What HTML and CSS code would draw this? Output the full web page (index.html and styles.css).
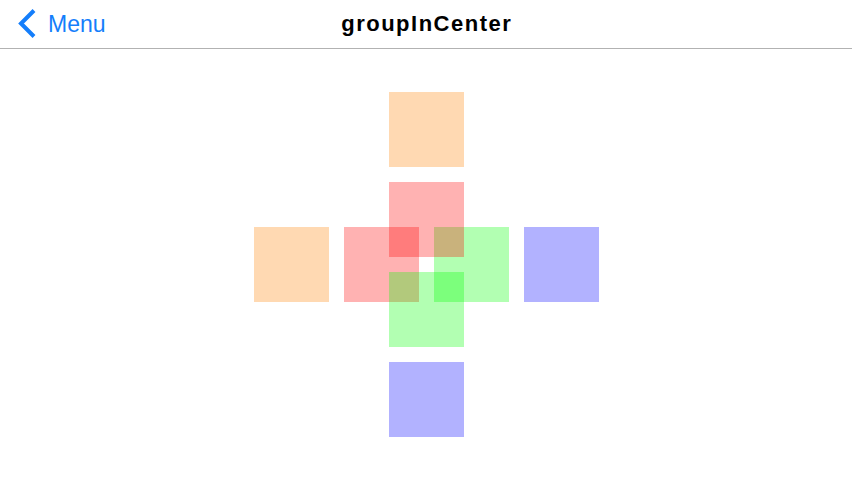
FILE: index.html
```html
<!DOCTYPE html>
<html>
<head>
<meta charset="utf-8">
<link rel="stylesheet" href="styles.css">
</head>
<body>
<header class="nav">
  <a class="back">
    <svg class="chev" width="18" height="30" viewBox="0 0 18 30"><path d="M16 1.5 L3 14.5 L16 27.5" fill="none" stroke="#147efb" stroke-width="4" stroke-linecap="butt" stroke-linejoin="miter"/></svg>
    <span class="back-label">Menu</span>
  </a>
  <h1 class="title">groupInCenter</h1>
</header>
<main class="stage">
  <div class="board">
    <div class="sq orange top"></div>
    <div class="sq orange left"></div>
    <div class="sq blue right"></div>
    <div class="sq blue bottom"></div>
    <div class="sq red inner-left"></div>
    <div class="sq green inner-right"></div>
    <div class="sq red inner-top"></div>
    <div class="sq green inner-bottom"></div>
  </div>
</main>
</body>
</html>
```
FILE: styles.css
```css
html, body {
  margin: 0;
  padding: 0;
  background: #fff;
  width: 852px;
  height: 480px;
  overflow: hidden;
  font-family: "Liberation Sans", Arial, sans-serif;
}
.nav {
  height: 48px;
  border-bottom: 1px solid #b2b2b2;
  display: grid;
  grid-template-columns: 1fr auto 1fr;
  align-items: center;
  box-sizing: content-box;
}
.back {
  display: flex;
  align-items: center;
  gap: 12px;
  padding-left: 18px;
  color: #147efb;
  font-size: 23px;
  grid-column: 1;
  grid-row: 1;
}
.chev { display: block; }
.back-label { line-height: 1; margin-top: 1px; }
.title {
  grid-column: 2;
  grid-row: 1;
  margin: 0;
  font-size: 22px;
  font-weight: bold;
  letter-spacing: 1.5px;
  padding-left: 1.5px;
  color: #000;
}
.stage {
  height: 431px;
  display: flex;
  align-items: center;
  justify-content: center;
}
.board {
  display: grid;
  grid-template-columns: repeat(23, 15px);
  grid-template-rows: repeat(23, 15px);
  margin-left: 1px;
}
.sq {
  grid-column-end: span 5;
  grid-row-end: span 5;
}
.orange { background: rgba(255, 128, 0, 0.3); }
.red { background: rgba(255, 0, 0, 0.3); }
.green { background: rgba(0, 255, 0, 0.3); }
.blue { background: rgba(0, 0, 255, 0.3); }
.top { grid-column-start: 10; grid-row-start: 1; }
.left { grid-column-start: 1; grid-row-start: 10; }
.right { grid-column-start: 19; grid-row-start: 10; }
.bottom { grid-column-start: 10; grid-row-start: 19; }
.inner-top { grid-column-start: 10; grid-row-start: 7; }
.inner-left { grid-column-start: 7; grid-row-start: 10; }
.inner-right { grid-column-start: 13; grid-row-start: 10; }
.inner-bottom { grid-column-start: 10; grid-row-start: 13; }
```
